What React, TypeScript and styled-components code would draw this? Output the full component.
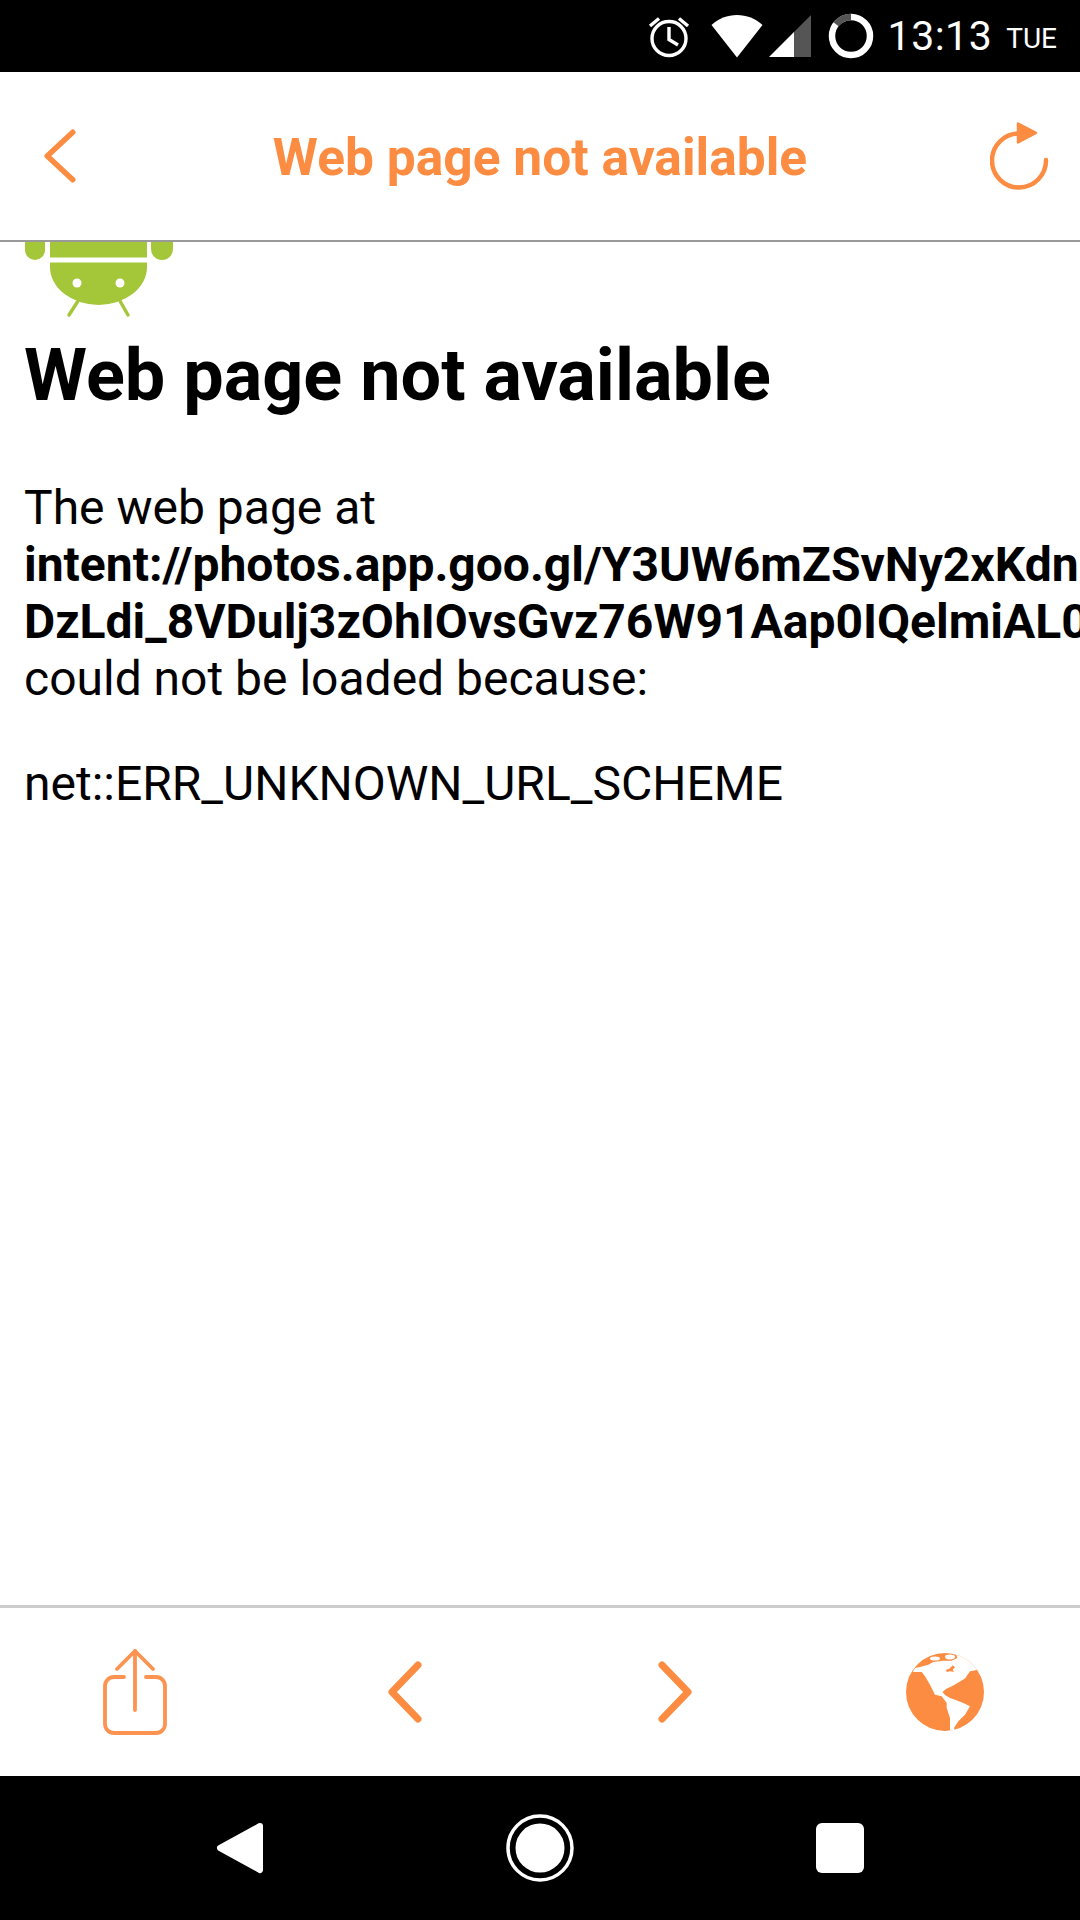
import React from 'react';
import styled, { createGlobalStyle } from 'styled-components';

const ORANGE = '#fb8c42';

const GlobalStyle = createGlobalStyle`
  html, body {
    margin: 0;
    padding: 0;
    background: #fff;
  }
  #root {
    height: 1920px;
  }
`;

const Screen = styled.div`
  width: 1080px;
  height: 1920px;
  display: flex;
  flex-direction: column;
  overflow: hidden;
  font-family: Roboto, 'Liberation Sans', sans-serif;
`;

const StatusBar = styled.div`
  height: 72px;
  flex: none;
  background: #000;
  color: #fff;
  display: flex;
  align-items: center;
  justify-content: flex-end;
  padding-right: 23px;
`;

const StatusIcon = styled.svg<{ $gap: number }>`
  display: block;
  flex: none;
  margin-right: ${p => p.$gap}px;
`;

const Clock = styled.span`
  font-size: 41px;
  line-height: 72px;
  letter-spacing: 0.5px;
  margin-right: 14px;
`;

const Day = styled.span`
  font-size: 28px;
  line-height: 72px;
  padding-top: 5px;
`;

const Header = styled.header`
  height: 170px;
  flex: none;
  box-sizing: border-box;
  display: grid;
  grid-template-columns: 120px 1fr 120px;
  align-items: center;
  background: #fff;
  border-bottom: 2px solid #999;
`;

const HeaderTitle = styled.h2`
  margin: 0;
  padding-top: 3px;
  text-align: center;
  color: ${ORANGE};
  font-size: 51.5px;
  font-weight: 700;
  line-height: 60px;
  white-space: nowrap;
`;

const HeaderSlot = styled.div<{ $side: 'left' | 'right' }>`
  display: flex;
  justify-content: ${p => (p.$side === 'left' ? 'flex-start' : 'flex-end')};
  padding: ${p => (p.$side === 'left' ? '0 0 0 44px' : '0 30px 0 0')};
`;

const Content = styled.main`
  flex: 1;
  min-height: 0;
  overflow: hidden;
  background: #fff;
  color: #000;
  padding: 0 0 0 24px;
`;

const Robot = styled.svg`
  display: block;
`;

const Heading = styled.h1`
  margin: 16px 0 0;
  font-size: 72px;
  font-weight: 700;
  line-height: 84px;
  white-space: nowrap;
`;

const Paragraph = styled.p`
  margin: 61px 0 0;
  font-size: 48px;
  line-height: 57px;
  white-space: nowrap;
`;

const Url = styled.strong`
  display: block;
  font-weight: 700;
`;

const ErrorCode = styled.p`
  margin: 48px 0 0;
  font-size: 48px;
  line-height: 57px;
  white-space: nowrap;
`;

const Toolbar = styled.footer`
  height: 171px;
  flex: none;
  box-sizing: border-box;
  display: grid;
  grid-template-columns: repeat(4, 1fr);
  align-items: center;
  justify-items: center;
  background: #fff;
  border-top: 3px solid #ccc;
`;

const NavBar = styled.nav`
  height: 144px;
  flex: none;
  background: #000;
  display: grid;
  grid-template-columns: repeat(3, 300px);
  justify-content: center;
  align-items: center;
  justify-items: center;
`;

const NavIcon = styled.svg`
  display: block;
`;

const Icon = styled.svg`
  display: block;
`;

const Chevron = ({ dir, w, h, sw }: { dir: 'left' | 'right'; w: number; h: number; sw: number }) => {
  const p = sw / 2 + 0.5;
  const d =
    dir === 'left'
      ? `M${w - p} ${p} L${p} ${h / 2} L${w - p} ${h - p}`
      : `M${p} ${p} L${w - p} ${h / 2} L${p} ${h - p}`;
  return (
    <Icon width={w} height={h} viewBox={`0 0 ${w} ${h}`}>
      <path d={d} fill="none" stroke={ORANGE} strokeWidth={sw} strokeLinecap="round" strokeLinejoin="round" />
    </Icon>
  );
};

const ReloadIcon = () => (
  <Icon width="60" height="68" viewBox="0 0 60 68">
    <path
      d="M56 38 A27 27 0 1 1 29 11.5"
      fill="none"
      stroke={ORANGE}
      strokeWidth="4.5"
      strokeLinecap="round"
    />
    <path d="M28 1.5 L46 10.8 L28 20.5 Z" fill={ORANGE} stroke={ORANGE} strokeWidth="2.5" strokeLinejoin="round" />
  </Icon>
);

const ShareIcon = () => (
  <Icon width="64" height="88" viewBox="0 0 64 88">
    <g fill="none" stroke="#fc9350" strokeWidth="3.8" strokeLinecap="round" strokeLinejoin="round">
      <path d="M21 29 H11 A9 9 0 0 0 2 38 V76 A9 9 0 0 0 11 85 H53 A9 9 0 0 0 62 76 V38 A9 9 0 0 0 53 29 H43" />
      <path d="M32 62 V3" />
      <path d="M14 21 L32 3 L50 21" />
    </g>
  </Icon>
);

const GlobeIcon = () => (
  <Icon width="78" height="78" viewBox="0 0 78 78">
    <defs>
      <clipPath id="globe-clip">
        <circle cx="39" cy="39" r="39" />
      </clipPath>
    </defs>
    <circle cx="39" cy="39" r="39" fill={ORANGE} />
    <g clipPath="url(#globe-clip)" fill="#fff">
      <path d="M6.7 19 L9 15 L14 14 L22.3 11.7 L27.3 9 L37.3 7.7 L45.7 7.7 L51.3 5 L50 0 L85 0 L72.3 16.7 L64 18.3 L59 25.5 L47.3 32.5 L40 36 L36.5 39 L39 42 L44 45 L49 46.7 L57.3 50 L64 53.3 L59 61.7 L52.3 68.3 L48 75 L49 78 L44 78 L44 65 L40.7 55 L40.7 50 L35.7 43.3 L29 41.7 L24 31.7 L19 23.3 L15.7 19 Z" />
      <ellipse cx="29" cy="5.4" rx="5" ry="2" />
      <ellipse cx="44" cy="4" rx="5" ry="2.4" />
    </g>
    <path d="M40 16.7 L43.3 15.7 L46.7 12.3 L49 14.3 L46.7 16.7 L48 19 L44 18.3 L40.7 19 Z" fill={ORANGE} />
  </Icon>
);

const AndroidIcon = () => (
  <Robot width="150" height="76" viewBox="0 0 150 76">
    <g fill="#a4c639">
      <path d="M1 0 H21 V8 A10 10 0 0 1 1 8 Z" />
      <path d="M127 0 H149 V7 A11 11 0 0 1 127 7 Z" />
      <rect x="26" y="0" width="97" height="15.5" />
      <path d="M26 20.5 H123 V25 A48.5 38 0 0 1 26 25 Z" />
    </g>
    <g fill="none" stroke="#a4c639" strokeWidth="3.4" strokeLinecap="round">
      <path d="M54 59 L45 73" />
      <path d="M96 59 L104 73" />
    </g>
    <circle cx="53" cy="41" r="4.5" fill="#fff" />
    <circle cx="96" cy="41" r="4.5" fill="#fff" />
  </Robot>
);

export default function App() {
  return (
    <Screen>
      <GlobalStyle />
      <StatusBar>
        <StatusIcon $gap={21} width="42" height="44" viewBox="0 0 42 44">
          <g fill="none" stroke="#fff" strokeWidth="3.4">
            <circle cx="21" cy="24.5" r="17" />
            <path d="M21 13 V25.5 L30 31" />
            <path d="M2 12 L11 4.5" />
            <path d="M40 12 L31 4.5" />
          </g>
        </StatusIcon>
        <StatusIcon $gap={6} width="52" height="44" viewBox="0 0 52 44">
          <path d="M0.5 11 C14 -2.5 38 -2.5 51.5 11 L26 43.5 Z" fill="#fff" />
        </StatusIcon>
        <StatusIcon $gap={17} width="42" height="44" viewBox="0 0 42 44">
          <path d="M0 43 L25 18 V43 Z" fill="#fff" />
          <path d="M25 18 L42 1 V43 H25 Z" fill="#555" />
        </StatusIcon>
        <StatusIcon $gap={14} width="46" height="46" viewBox="0 0 46 46">
          <circle cx="23" cy="23" r="19" fill="none" stroke="#fff" strokeWidth="6.5" />
          <path d="M23 4 A19 19 0 0 0 8 11.3" fill="none" stroke="#555" strokeWidth="6.5" />
        </StatusIcon>
        <Clock>13:13</Clock>
        <Day>TUE</Day>
      </StatusBar>

      <Header>
        <HeaderSlot $side="left">
          <Chevron dir="left" w={32} h={54} sw={5.5} />
        </HeaderSlot>
        <HeaderTitle>Web page not available</HeaderTitle>
        <HeaderSlot $side="right">
          <ReloadIcon />
        </HeaderSlot>
      </Header>

      <Content>
        <AndroidIcon />
        <Heading>Web page not available</Heading>
        <Paragraph>
          The web page at
          <Url>intent://photos.app.goo.gl/Y3UW6mZSvNy2xKdn</Url>
          <Url>DzLdi_8VDulj3zOhIOvsGvz76W91Aap0IQelmiAL0</Url>
          could not be loaded because:
        </Paragraph>
        <ErrorCode>net::ERR_UNKNOWN_URL_SCHEME</ErrorCode>
      </Content>

      <Toolbar>
        <ShareIcon />
        <Chevron dir="left" w={34} h={62} sw={7} />
        <Chevron dir="right" w={34} h={62} sw={7} />
        <GlobeIcon />
      </Toolbar>

      <NavBar>
        <NavIcon width="48" height="52" viewBox="0 0 48 52">
          <path d="M44 4 L4 26 L44 48 Z" fill="#fff" stroke="#fff" strokeWidth="6" strokeLinejoin="round" />
        </NavIcon>
        <NavIcon width="68" height="68" viewBox="0 0 68 68">
          <circle cx="34" cy="34" r="32" fill="none" stroke="#fff" strokeWidth="3.5" />
          <circle cx="34" cy="34" r="24.5" fill="#fff" />
        </NavIcon>
        <NavIcon width="50" height="50" viewBox="0 0 50 50">
          <rect x="1" y="0" width="48" height="50" rx="6" fill="#fff" />
        </NavIcon>
      </NavBar>
    </Screen>
  );
}
